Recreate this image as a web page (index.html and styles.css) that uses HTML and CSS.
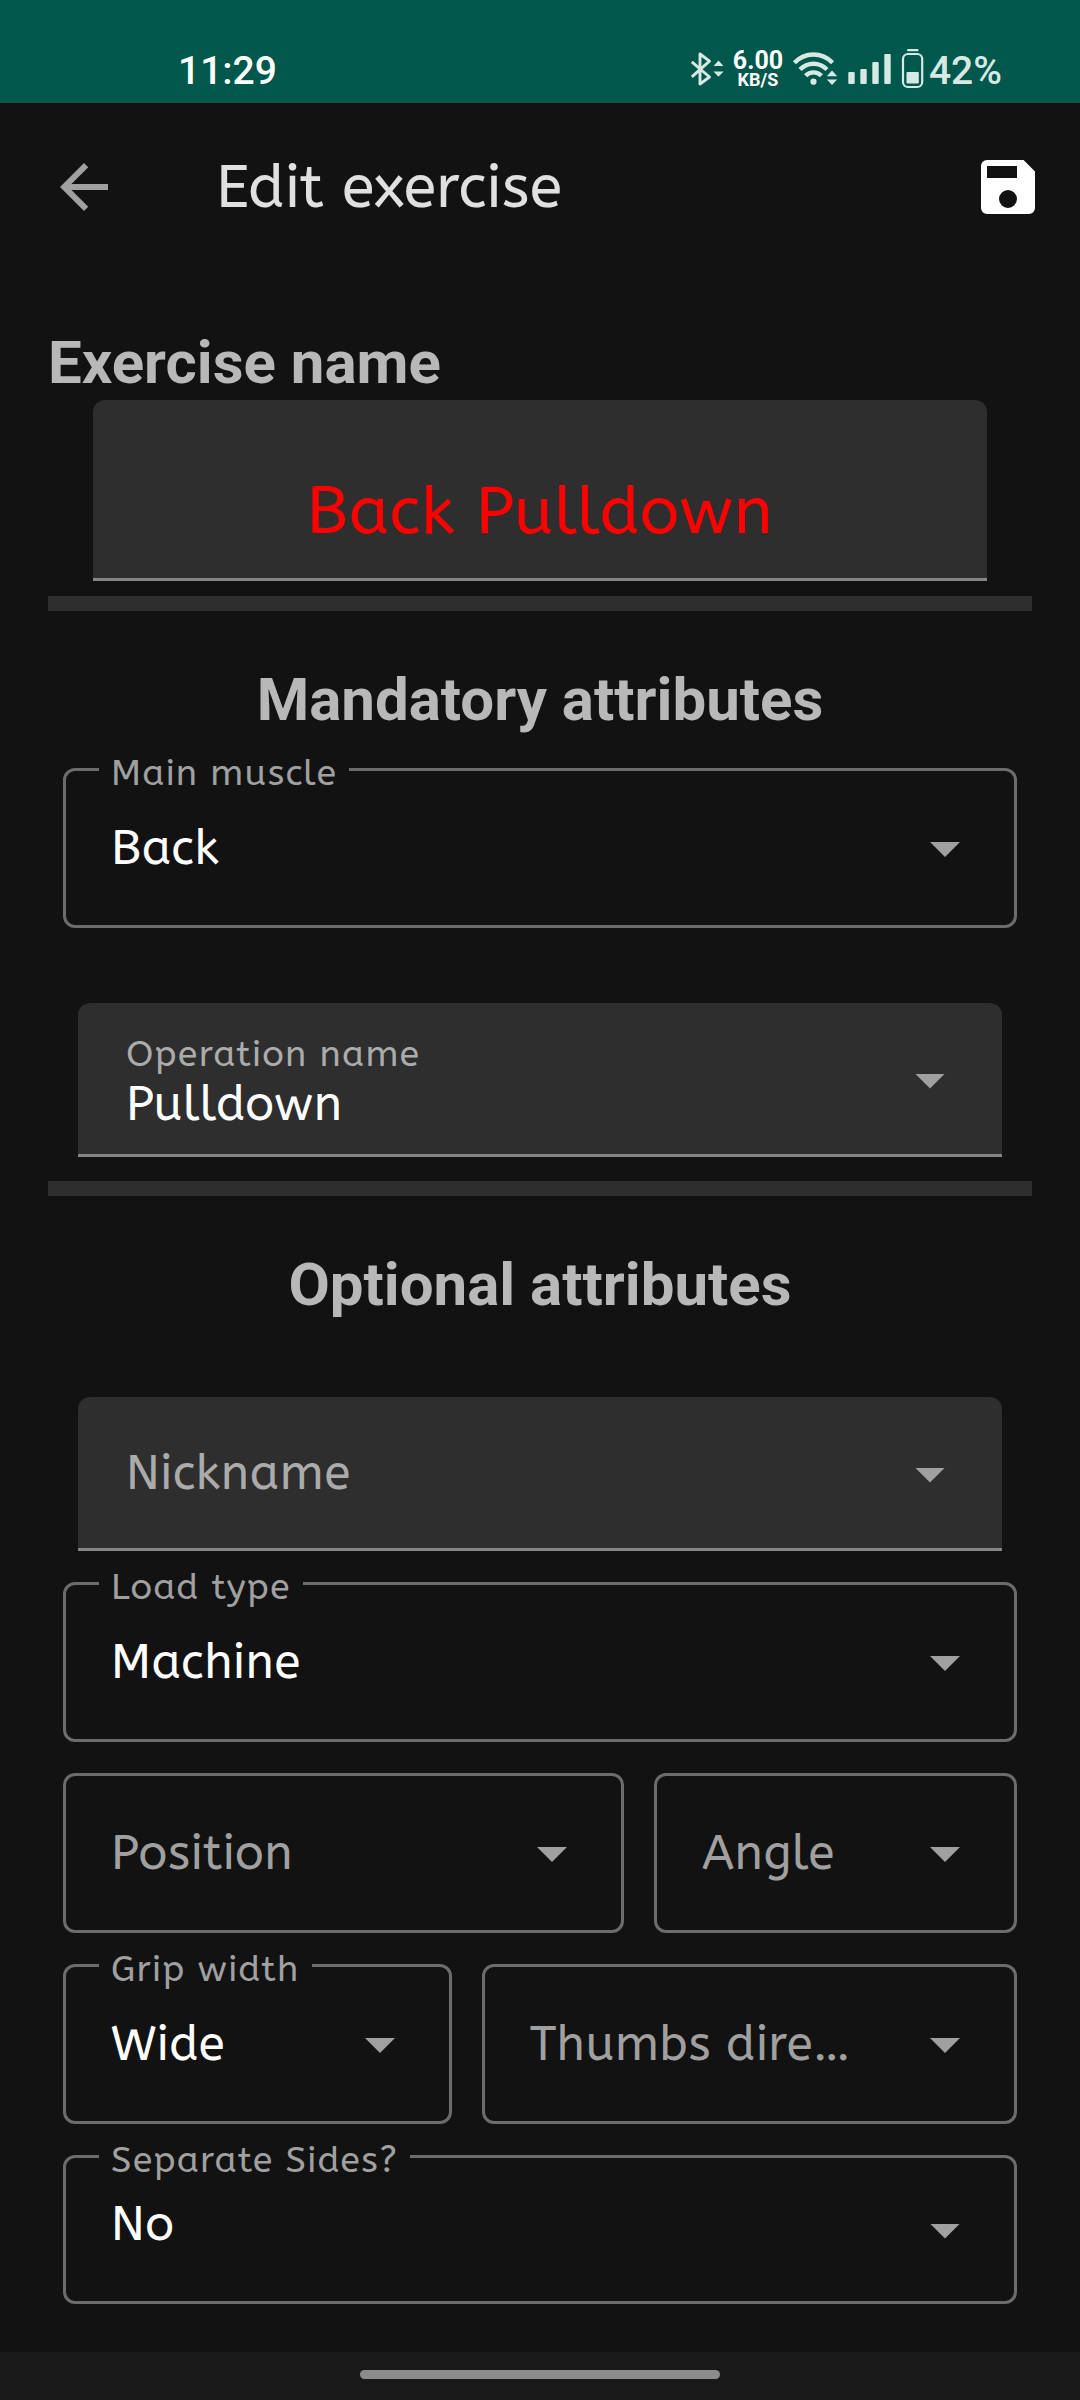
FILE: index.html
```html
<!DOCTYPE html>
<html lang="en">
<head>
<meta charset="utf-8">
<title>Edit exercise</title>
<link rel="stylesheet" href="styles.css">
</head>
<body>
<div class="status">
  <span class="clock">11:29</span>
  <div class="indicators">
    <svg class="bt" viewBox="690 48 36 42" width="36" height="42">
      <path d="M691.8 61.8L709.5 77L700 84V54L709.5 61.2L691.8 76.8" fill="none" stroke="currentColor" stroke-width="2.9" stroke-linejoin="round"/>
      <path d="M713.5 66l5-5.5 5 5.5zM713.5 71.5h10l-5 5.2z" fill="currentColor"/>
    </svg>
    <div class="speed"><span class="rate">6.00</span><span class="unit">KB/S</span></div>
    <svg class="wifi" viewBox="792 48 46 42" width="46" height="42">
      <g fill="none" stroke="currentColor" stroke-width="4.4">
        <path d="M794.4 62.8C805 51.8 822 51.8 832.6 62.8"/>
        <path d="M800 69.6C807.5 61.8 819.5 61.8 827 69.6"/>
        <path d="M805.6 75.8C810 71.2 817 71.2 821.4 75.8"/>
      </g>
      <circle cx="813.5" cy="81.7" r="3.1" fill="currentColor"/>
      <path d="M826.8 76.2l5.2-5.7 5.2 5.7zM826.8 79.5h10.4l-5.2 5.5z" fill="currentColor"/>
    </svg>
    <svg class="signal" viewBox="848 48 44 42" width="44" height="42">
      <g fill="currentColor">
        <rect x="848.3" y="72" width="6.4" height="12" rx="1"/>
        <rect x="860.3" y="69" width="6.4" height="15" rx="1"/>
        <rect x="872.3" y="62" width="6.4" height="22" rx="1"/>
        <rect x="884.3" y="54" width="6.4" height="30" rx="1"/>
      </g>
    </svg>
    <svg class="battery" viewBox="901 48 24 42" width="24" height="42">
      <rect x="907" y="49" width="11.5" height="2.3" rx="1" fill="currentColor"/>
      <rect x="903" y="54" width="19.2" height="33" rx="5" fill="none" stroke="currentColor" stroke-width="2.2"/>
      <rect x="906.5" y="72" width="12.3" height="11.5" rx="1" fill="currentColor"/>
    </svg>
    <span class="percent">42%</span>
  </div>
</div>

<header class="appbar">
  <svg viewBox="0 0 24 24" width="72" height="72"><path fill="#a0a0a0" d="M20 11H7.830l5.590-5.590L12 4l-8 8 8 8 1.410-1.410L7.830 13H20v-2z"/></svg>
  <h1>Edit exercise</h1>
  <svg viewBox="0 0 24 24" width="72" height="72"><path fill="#fff" fill-rule="evenodd" d="M17.200 3H5a2 2 0 0 0-2 2v14a2 2 0 0 0 2 2h14a2 2 0 0 0 2-2V6.800zM5 5h10v4H5zM12 13a3 3 0 1 1 0 6 3 3 0 0 1 0-6z"/></svg>
</header>

<main class="form">
  <h2 class="left">Exercise name</h2>
  <div class="name-field">Back Pulldown</div>
  <hr>
  <h2>Mandatory attributes</h2>
  <div class="outlined first"><span class="label">Main muscle</span><span class="value">Back</span><i class="arrow"></i></div>
  <div class="filled operation"><div class="stack"><span class="caption">Operation name</span><span class="value">Pulldown</span></div><i class="arrow"></i></div>
  <hr class="loose">
  <h2>Optional attributes</h2>
  <div class="filled nickname"><span class="value hint">Nickname</span><i class="arrow"></i></div>
  <div class="rows">
    <div class="outlined"><span class="label">Load type</span><span class="value">Machine</span><i class="arrow"></i></div>
    <div class="row position">
      <div class="outlined"><span class="value hint">Position</span><i class="arrow"></i></div>
      <div class="outlined"><span class="value hint">Angle</span><i class="arrow"></i></div>
    </div>
    <div class="row grip">
      <div class="outlined"><span class="label">Grip width</span><span class="value">Wide</span><i class="arrow"></i></div>
      <div class="outlined"><span class="value hint">Thumbs dire…</span><i class="arrow"></i></div>
    </div>
    <div class="outlined short"><span class="label">Separate Sides?</span><span class="value">No</span><i class="arrow"></i></div>
  </div>
</main>

<footer class="nav"><div class="pill"></div></footer>
</body>
</html>
```
FILE: styles.css
```css
* { box-sizing: border-box; }

body {
  margin: 0;
  width: 1080px;
  height: 2400px;
  display: flex;
  flex-direction: column;
  overflow: hidden;
  background: #121212;
  color: #fff;
  font-family: ABeeZee, "Noto Sans", sans-serif;
}

svg { display: block; flex: none; }

.status {
  height: 103px;
  padding: 36px 78px 0 178px;
  display: flex;
  justify-content: space-between;
  background: #00574b;
  font: 500 39px/70px Roboto, sans-serif;
}

.indicators { display: flex; color: #d8e8e5; }
.indicators svg { margin-top: 12px; }
.speed {
  width: 52px;
  margin: 15px 8px 0 6px;
  display: flex;
  flex-direction: column;
  align-items: center;
  color: #fff;
}
.rate { font-size: 25px; font-weight: 700; line-height: 20px; }
.unit { font-size: 18px; font-weight: 700; line-height: 17px; }
.signal { margin-left: 10px; }
.battery { margin: 0 4px 0 9px; }

.appbar {
  height: 168px;
  padding: 0 36px 0 48px;
  display: flex;
  align-items: center;
}
.appbar h1 {
  flex: 1;
  margin: 0 0 0 96px;
  font-size: 60px;
  font-weight: 400;
  color: #e0e0e0;
}

.form { flex: 1; padding: 56px 48px 0; }

h2 {
  margin: 53px 0 0;
  font: 700 60px/71px Roboto, sans-serif;
  text-align: center;
  color: #b8b8b8;
}
h2.left { margin: 0 0 2px; text-align: left; }

hr {
  height: 15px;
  margin: 15px 0 0;
  border: 0;
  background: #2e2e2e;
}
hr.loose { margin-top: 24px; }

.name-field {
  height: 181px;
  margin: 0 45px;
  padding-top: 71px;
  border-bottom: 3px solid #858585;
  border-radius: 12px 12px 0 0;
  background: #2e2e2e;
  color: #f00;
  font-size: 66px;
  line-height: 80px;
  letter-spacing: 0.009em;
  text-align: center;
}

.outlined, .filled {
  display: flex;
  align-items: center;
  justify-content: space-between;
}
.outlined {
  position: relative;
  height: 160px;
  padding: 0 54px 0 45px;
  border: 3px solid #6c6c6c;
  border-radius: 12px;
}
.outlined.first { margin: 33px 15px 0; }
.filled {
  height: 154px;
  margin: 75px 30px 0;
  padding: 0 57px 0 48px;
  border-bottom: 3px solid #858585;
  border-radius: 12px 12px 0 0;
  background: #2e2e2e;
}
.filled.nickname { margin-top: 77px; }

.label {
  position: absolute;
  top: -16px;
  left: 33px;
  padding: 0 12px;
  background: #121212;
  line-height: 36px;
}
.label, .caption {
  font-size: 36px;
  letter-spacing: 0.0333em;
  color: #a0a0a0;
}
.caption { line-height: 50px; color: #ababab; margin: -1px 0 1px; }
.value {
  margin-top: 2px;
  font-size: 48px;
  line-height: 50px;
  letter-spacing: 0.009375em;
  white-space: nowrap;
}
.hint { color: #a0a0a0; }
.filled .hint { color: #ababab; }
.stack { display: flex; flex-direction: column; margin-top: 2px; }
.stack .value { margin-top: 0; }

.arrow {
  flex: none;
  width: 30px;
  height: 15px;
  margin-top: 3px;
  background: #a0a0a0;
  clip-path: polygon(0 0, 100% 0, 50% 100%);
}
.filled .arrow { margin-top: 5px; }

.rows {
  display: flex;
  flex-direction: column;
  gap: 31px;
  margin: 31px 15px 0;
}
.row { display: grid; gap: 30px; }
.position { grid-template-columns: 561px 363px; }
.grip { grid-template-columns: 389px 535px; }
.short { height: 149px; }
.short .value { margin-top: -10px; }

.nav {
  height: 48px;
  padding-top: 18px;
  background: #191919;
}
.pill {
  width: 360px;
  height: 9px;
  margin: 0 auto;
  border-radius: 5px;
  background: #8c8c8c;
}
```
